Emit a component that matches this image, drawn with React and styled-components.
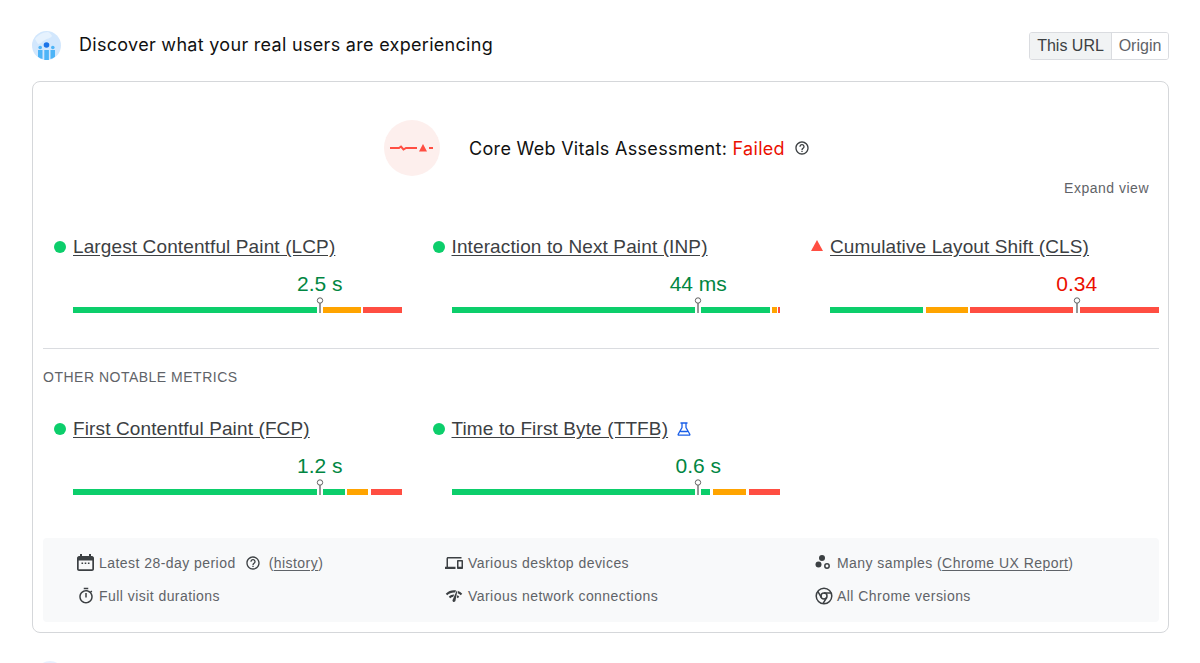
import React from 'react';
import styled, { createGlobalStyle } from 'styled-components';

const GlobalStyle = createGlobalStyle`
  html, body {
    margin: 0;
    padding: 0;
    background: #fff;
    overflow: hidden;
  }
  body {
    font-family: "Liberation Sans", Arial, sans-serif;
  }
`;

const GREEN = '#0cce6b';
const ORANGE = '#ffa400';
const RED = '#ff4e42';

const Page = styled.div`
  width: 1200px;
  height: 663px;
  box-sizing: border-box;
  padding: 31px 31px 0 32px;
  overflow: hidden;
`;
const Header = styled.header`
  display: flex;
  align-items: center;
  justify-content: space-between;
  height: 29px;
  margin-bottom: 21px;
`;
const HeaderLeft = styled.div`
  display: flex;
  align-items: center;
  gap: 18px;
`;
const Heading = styled.h1`
  margin: 0 0 2px;
  font-family: "Inter", sans-serif;
  font-weight: 400;
  font-size: 18px;
  letter-spacing: 0.3px;
  color: #111;
`;
const Toggle = styled.div`
  display: flex;
  height: 28px;
  box-sizing: border-box;
  border: 1px solid #dadce0;
  border-radius: 3px;
  overflow: hidden;
`;
const ToggleItem = styled.div`
  display: flex;
  align-items: center;
  justify-content: center;
  width: ${(p) => p.$w}px;
  font-size: 16px;
  color: ${(p) => (p.$active ? '#3c4043' : '#5f6368')};
  background: ${(p) => (p.$active ? '#f1f3f4' : '#fff')};
  border-right: ${(p) => (p.$active ? '1px solid #dadce0' : 'none')};
`;
const Card = styled.section`
  box-sizing: border-box;
  height: 552px;
  padding: 38px 9px 10px 10px;
  border: 1px solid #d5d7da;
  border-radius: 8px;
`;
const Assessment = styled.div`
  display: flex;
  align-items: center;
  justify-content: center;
  height: 56px;
  padding-right: 8px;
`;
const FailBadge = styled.div`
  display: flex;
  align-items: center;
  justify-content: center;
  width: 56px;
  height: 56px;
  border-radius: 50%;
  background: #fdefed;
  margin-right: 29px;
`;
const AssessmentText = styled.div`
  font-family: "Inter", sans-serif;
  font-size: 18px;
  letter-spacing: 0.3px;
  color: #111;
  margin-right: 9px;
`;
const Failed = styled.span`
  color: #eb0f00;
`;
const ExpandRow = styled.div`
  display: flex;
  justify-content: flex-end;
  align-items: center;
  height: 20px;
  margin-top: 2px;
  padding-right: 10px;
  font-size: 14px;
  letter-spacing: 0.5px;
  color: #5f6368;
`;
const MetricGrid = styled.div`
  display: grid;
  grid-template-columns: repeat(3, 359px);
  column-gap: 19.5px;
  margin-top: ${(p) => p.$top}px;
`;
const Metric = styled.div`
  display: flex;
  flex-direction: column;
  padding-left: 30px;
`;
const TitleRow = styled.div`
  display: flex;
  align-items: center;
  height: 24px;
  margin: -1px 0 1px -19px;
`;
const StatusDot = styled.span`
  width: 12px;
  height: 12px;
  border-radius: 50%;
  background: ${GREEN};
  margin-right: 7px;
  flex: none;
`;
const StatusTriangle = styled.span`
  width: 0;
  height: 0;
  border-left: 6px solid transparent;
  border-right: 6px solid transparent;
  border-bottom: 11px solid ${RED};
  margin-right: 7px;
  margin-top: -3px;
  flex: none;
`;
const MetricTitle = styled.a`
  font-size: 19px;
  letter-spacing: 0.12px;
  color: #3c4043;
  text-decoration: underline;
  text-underline-offset: 2px;
`;
const BetaIcon = styled.svg`
  margin-left: 9px;
  margin-top: -1px;
`;
const ValueRow = styled.div`
  position: relative;
  height: 24px;
  margin-top: 12px;
`;
const Value = styled.span`
  position: absolute;
  left: 75%;
  transform: translateX(-50%);
  font-size: 21px;
  line-height: 24px;
  white-space: nowrap;
  color: ${(p) => (p.$bad ? '#eb0f00' : '#018642')};
`;
const Bar = styled.div`
  position: relative;
  display: flex;
  height: 6px;
  margin-top: 11px;
`;
const Segment = styled.span`
  width: ${(p) => p.$w}px;
  margin-left: ${(p) => p.$gap || 0}px;
  background: ${(p) => p.$color};
  flex: none;
`;
const Pin = styled.svg`
  position: absolute;
  left: 75%;
  bottom: 0;
  margin-left: -4px;
`;
const Divider = styled.hr`
  margin: 35px 0 0;
  border: none;
  border-top: 1px solid #dadce0;
`;
const SectionLabel = styled.div`
  margin-top: 18px;
  height: 20px;
  line-height: 20px;
  font-size: 14px;
  letter-spacing: 0.5px;
  text-transform: uppercase;
  color: #5f6368;
`;
const Footer = styled.div`
  display: grid;
  grid-template-columns: 368px 370px 1fr;
  grid-auto-rows: 33px;
  margin-top: 43px;
  padding: 8px 0 9px 34px;
  height: 84px;
  box-sizing: border-box;
  background: #f8f9fa;
  border-radius: 4px;
`;
const FootItem = styled.div`
  display: flex;
  align-items: center;
  gap: ${(p) => p.$gap || 5}px;
  font-size: 14px;
  letter-spacing: 0.45px;
  color: #5f6368;
  white-space: nowrap;
`;
const FootLink = styled.a`
  text-decoration: underline;
  text-underline-offset: 2px;
`;
const HelpSlot = styled.span`
  display: flex;
  margin: 0 3px 0 4px;
`;
const NextIcon = styled.div`
  width: 28px;
  height: 28px;
  margin-top: 28px;
  margin-left: 4px;
  border-radius: 50%;
  background: #e8f0fe;
`;

const Logo = () => (
  <svg width="29" height="29" viewBox="0 0 29 29">
    <circle cx="14.5" cy="14.5" r="14.5" fill="#d2e7fd" />
    <path d="M3 8c3-4 8-7 13-7 2 1 3 2 4 4-2 3-5 2-7 4-3 1-4 4-7 4-1-2-2-3-3-5z" fill="#e6f2fe" />
    <path d="M6 19h4.500v9c-1.600-.4-3.100-1.200-4.500-2.300zM12.300 19h4.600v10h-4.600zM18.500 19H23v6.700c-1.400 1.100-2.900 1.900-4.500 2.300z" fill="#4db4f7" />
    <circle cx="8.200" cy="16.500" r="1.800" fill="#4db4f7" />
    <circle cx="20.800" cy="16.500" r="1.800" fill="#4db4f7" />
    <circle cx="14.500" cy="14" r="2.800" fill="#1a73e8" />
  </svg>
);

const FailWave = () => (
  <svg width="44" height="12" viewBox="0 0 44 12" fill="none">
    <path d="M0 6h9l2-1.500 2.500 3 2.500-1.500h11" stroke={RED} strokeWidth="2" />
    <path d="M29 9.500 33 2l4 7.500z" fill={RED} />
    <path d="M39 6h4" stroke={RED} strokeWidth="2" />
  </svg>
);

const Help = ({ size, color }) => (
  <svg width={size} height={size} viewBox="0 0 24 24" fill={color}>
    <path d="M11 18h2v-2h-2v2zm1-16C6.480 2 2 6.480 2 12s4.480 10 10 10 10-4.480 10-10S17.520 2 12 2zm0 18c-4.410 0-8-3.590-8-8s3.590-8 8-8 8 3.590 8 8-3.590 8-8 8zm0-14c-2.210 0-4 1.790-4 4h2c0-1.100.9-2 2-2s2 .9 2 2c0 2-3 1.750-3 5h2c0-2.250 3-2.500 3-5 0-2.210-1.790-4-4-4z" />
  </svg>
);

const Calendar = () => (
  <svg width="17" height="18" viewBox="0 0 17 18" fill="#3c4043">
    <path fillRule="evenodd" d="M3 0h2v2h7V0h2v2h1c1 0 2 1 2 2v11c0 1-1 2-2 2H2c-1 0-2-1-2-2V4c0-1 1-2 2-2h1zM1.700 6.500V15c0 .2.100.3.300.3h13c.2 0 .3-.1.300-.3V6.500z" />
    <path d="M4.500 8.500h1.600v1.600H4.500zM7.700 8.500h1.600v1.600H7.700zM10.900 8.500h1.600v1.600h-1.600z" />
  </svg>
);

const Timer = () => (
  <svg width="18" height="18" viewBox="0 0 24 24" fill="#3c4043">
    <path d="M15 1H9v2h6V1zm-4 13h2V8h-2v6zm8.030-6.610l1.420-1.420c-.43-.51-.9-.99-1.410-1.410l-1.420 1.420C16.070 4.740 14.120 4 12 4c-4.970 0-9 4.030-9 9s4.020 9 9 9 9-4.030 9-9c0-2.120-.74-4.070-1.970-5.610zM12 20c-3.870 0-7-3.130-7-7s3.130-7 7-7 7 3.130 7 7-3.130 7-7 7z" />
  </svg>
);

const Devices = () => (
  <svg width="18" height="18" viewBox="0 0 24 24" fill="#3c4043">
    <path d="M4 6h18V4H4c-1.100 0-2 .9-2 2v11H0v3h14v-3H4V6zm19 2h-6c-.55 0-1 .45-1 1v10c0 .55.45 1 1 1h6c.55 0 1-.45 1-1V9c0-.55-.45-1-1-1zm-1 9h-4v-7h4v7z" />
  </svg>
);

const Network = () => (
  <svg width="18" height="18" viewBox="0 0 24 24" fill="#3c4043">
    <path d="M15.900 5c-.17 0-.32.09-.41.23l-.07.15-5.180 11.650c-.16.29-.26.61-.26.96 0 1.110.9 2.010 2.010 2.010.96 0 1.770-.68 1.960-1.590l.01-.03L16.400 5.500c0-.28-.22-.5-.5-.5zM1 9l2 2c2.880-2.880 6.790-4.080 10.530-3.620l1.190-2.680C9.890 3.840 4.740 5.270 1 9zm20 2l2-2c-1.640-1.640-3.550-2.820-5.590-3.570l-.53 2.820c1.500.62 2.900 1.530 4.120 2.750zm-4 4l2-2c-.8-.8-1.700-1.420-2.660-1.890l-.55 2.920c.42.27.83.59 1.210.97zM5 13l2 2c1.130-1.130 2.560-1.790 4.030-2l1.280-2.880c-2.630-.08-5.300.87-7.310 2.880z" />
  </svg>
);

const Samples = () => (
  <svg width="17" height="18" viewBox="0 0 17 18" fill="#3c4043">
    <circle cx="7" cy="4" r="3" />
    <circle cx="3.500" cy="10.500" r="3" />
    <circle cx="12" cy="12" r="2.200" fill="none" stroke="#3c4043" strokeWidth="1.500" />
  </svg>
);

const Chrome = () => (
  <svg width="18" height="18" viewBox="0 0 18 18" fill="none" stroke="#3c4043" strokeWidth="1.500">
    <circle cx="9" cy="9" r="7.800" />
    <circle cx="9" cy="9" r="3" />
    <path d="M9 6h7.200M6.400 10.500 2.800 4.300M11.600 10.500 8 16.700" />
  </svg>
);

const Flask = () => (
  <BetaIcon width="14" height="14" viewBox="0 0 14 14" fill="none" stroke="#1a5fe8" strokeWidth="1.300">
    <path d="M3.500 1h7M5 1v4.500L1.200 12.300c-.2.400 0 .9.500.9h10.600c.5 0 .7-.5.500-.9L9 5.500V1M3.500 9.500h7" />
  </BetaIcon>
);

const MarkerPin = () => (
  <Pin width="8" height="16" viewBox="0 0 8 16">
    <rect x="1" y="8" width="6" height="8" fill="#fff" />
    <rect x="3.250" y="6" width="1.500" height="10" fill="#757575" />
    <circle cx="4" cy="3.500" r="2.700" fill="#fff" stroke="#616161" />
  </Pin>
);

const metricsCore = [
  {
    name: 'Largest Contentful Paint (LCP)',
    value: '2.5 s',
    segments: [
      [GREEN, 244, 0],
      [GREEN, 0, 6],
      [ORANGE, 38, 0],
      [RED, 39, 2],
    ],
  },
  {
    name: 'Interaction to Next Paint (INP)',
    value: '44 ms',
    segments: [
      [GREEN, 243, 0],
      [GREEN, 69, 6],
      [ORANGE, 5, 2],
      [RED, 2, 1],
    ],
  },
  {
    name: 'Cumulative Layout Shift (CLS)',
    value: '0.34',
    bad: true,
    segments: [
      [GREEN, 93, 0],
      [ORANGE, 42, 3],
      [RED, 103, 2],
      [RED, 80, 6],
    ],
  },
];

const metricsOther = [
  {
    name: 'First Contentful Paint (FCP)',
    value: '1.2 s',
    segments: [
      [GREEN, 244, 0],
      [GREEN, 22, 6],
      [ORANGE, 21, 2],
      [RED, 31, 3],
    ],
  },
  {
    name: 'Time to First Byte (TTFB)',
    value: '0.6 s',
    beta: true,
    segments: [
      [GREEN, 243, 0],
      [GREEN, 9, 6],
      [ORANGE, 33, 3],
      [RED, 31, 3],
    ],
  },
];

const MetricBlock = ({ name, value, bad, beta, segments }) => (
  <Metric>
    <TitleRow>
      {bad ? <StatusTriangle /> : <StatusDot />}
      <MetricTitle>{name}</MetricTitle>
      {beta && <Flask />}
    </TitleRow>
    <ValueRow>
      <Value $bad={bad}>{value}</Value>
    </ValueRow>
    <Bar>
      {segments.map(([color, w, gap], i) => (
        <Segment key={i} $color={color} $w={w} $gap={gap} />
      ))}
      <MarkerPin />
    </Bar>
  </Metric>
);

const App = () => (
  <Page>
    <GlobalStyle />
    <Header>
      <HeaderLeft>
        <Logo />
        <Heading>Discover what your real users are experiencing</Heading>
      </HeaderLeft>
      <Toggle>
        <ToggleItem $active $w={81}>This URL</ToggleItem>
        <ToggleItem $w={56}>Origin</ToggleItem>
      </Toggle>
    </Header>
    <Card>
      <Assessment>
        <FailBadge>
          <FailWave />
        </FailBadge>
        <AssessmentText>
          Core Web Vitals Assessment: <Failed>Failed</Failed>
        </AssessmentText>
        <Help size={16} color="#3c4043" />
      </Assessment>
      <ExpandRow>Expand view</ExpandRow>
      <MetricGrid $top={38}>
        {metricsCore.map((m) => (
          <MetricBlock key={m.name} {...m} />
        ))}
      </MetricGrid>
      <Divider />
      <SectionLabel>Other notable metrics</SectionLabel>
      <MetricGrid $top={31}>
        {metricsOther.map((m) => (
          <MetricBlock key={m.name} {...m} />
        ))}
      </MetricGrid>
      <Footer>
        <FootItem>
          <Calendar />
          Latest 28-day period
          <HelpSlot>
            <Help size={16} color="#3c4043" />
          </HelpSlot>
          <span>
            (<FootLink>history</FootLink>)
          </span>
        </FootItem>
        <FootItem>
          <Devices />
          Various desktop devices
        </FootItem>
        <FootItem>
          <Samples />
          <span>
            Many samples (<FootLink>Chrome UX Report</FootLink>)
          </span>
        </FootItem>
        <FootItem $gap={4}>
          <Timer />
          Full visit durations
        </FootItem>
        <FootItem>
          <Network />
          Various network connections
        </FootItem>
        <FootItem $gap={4}>
          <Chrome />
          All Chrome versions
        </FootItem>
      </Footer>
    </Card>
    <NextIcon />
  </Page>
);

export default App;
